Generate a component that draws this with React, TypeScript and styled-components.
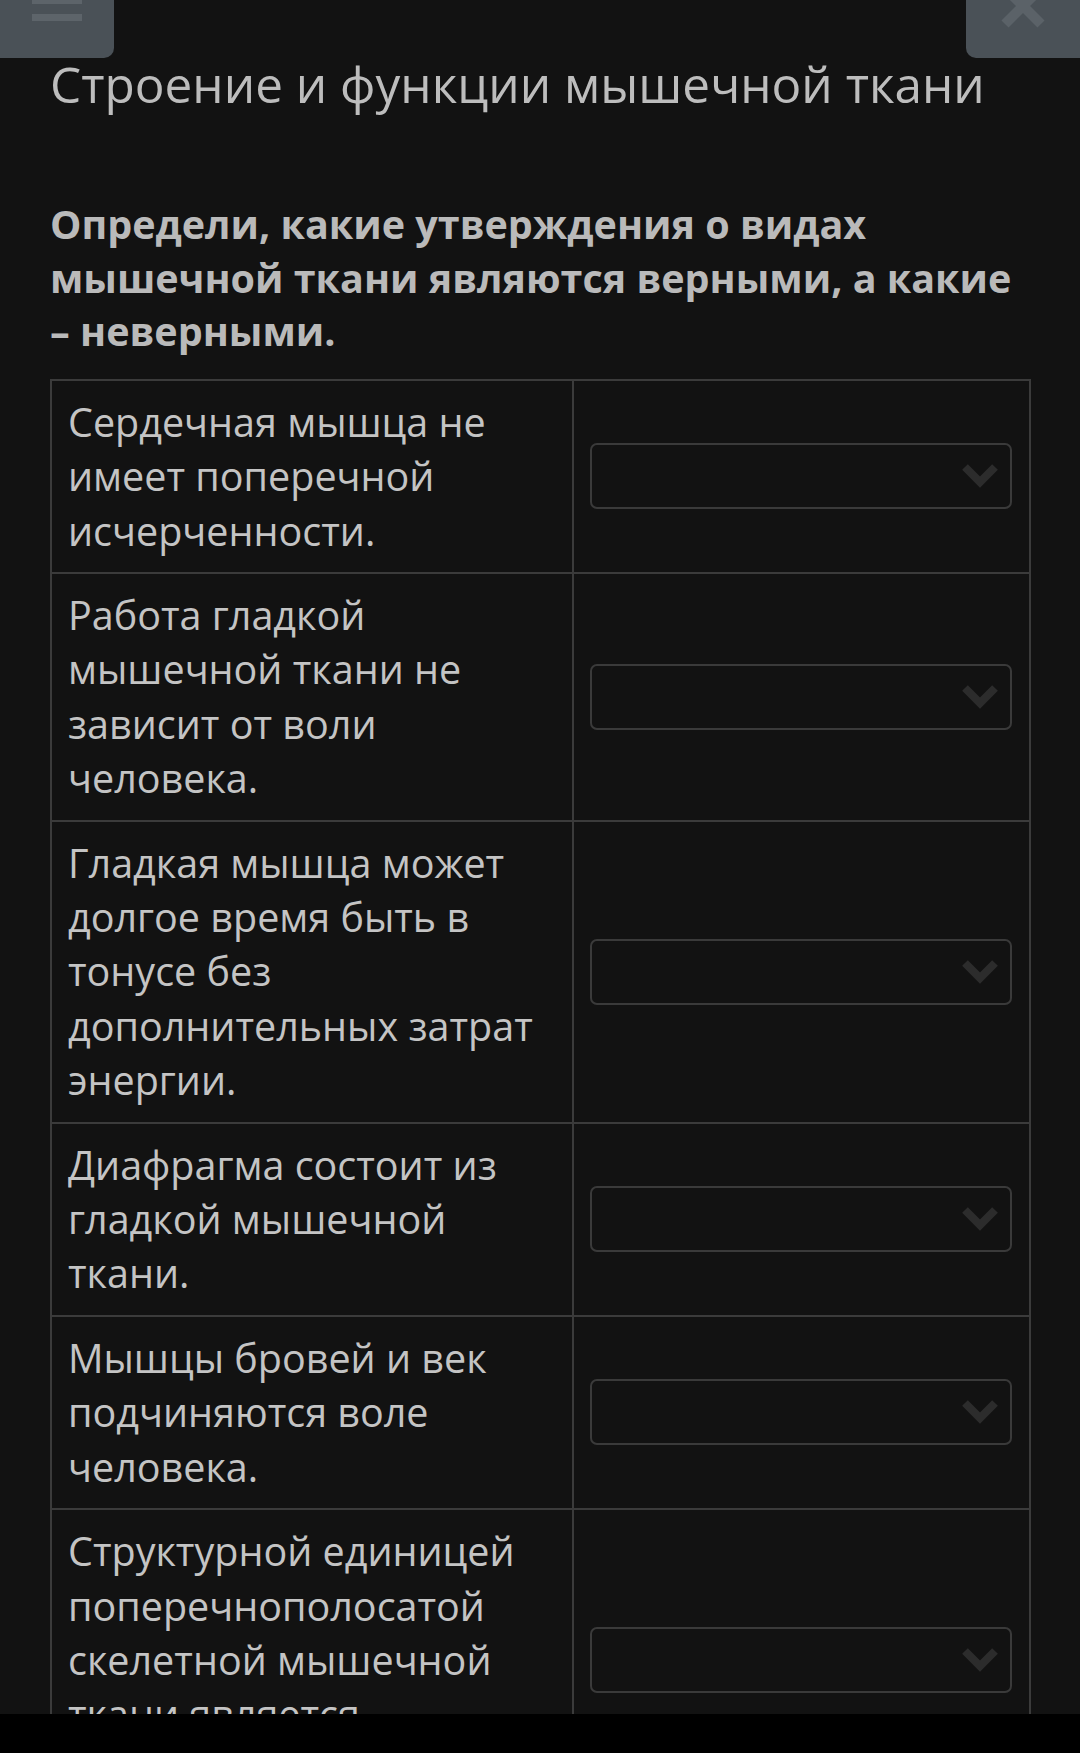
import styled, { createGlobalStyle } from 'styled-components';

const bg = '#121212';
const line = '#3b3b3b';
const text = '#c4c4c4';

const GlobalStyle = createGlobalStyle`
  html, body {
    margin: 0;
    padding: 0;
    background: ${bg};
  }
  body {
    font-family: 'Open Sans', 'Noto Sans', sans-serif;
    color: ${text};
    overflow: hidden;
  }
`;

const Screen = styled.div`
  position: relative;
  width: 1080px;
  height: 1753px;
  overflow: hidden;
  background: ${bg};
`;

const Page = styled.div`
  display: flex;
  flex-direction: column;
  padding: 0 49px 0 50px;
`;

const Title = styled.h1`
  margin: 54px 0 0;
  font-size: 49.5px;
  font-weight: 400;
  line-height: 60px;
  color: #bdbdbd;
  white-space: nowrap;
`;

const Question = styled.p`
  margin: 84px 0 20px;
  font-size: 39.5px;
  font-weight: 700;
  line-height: 53.6px;
  color: #bababa;
`;

const Table = styled.div`
  display: flex;
  flex-direction: column;
  border-top: 2px solid ${line};
`;

const Row = styled.div`
  display: grid;
  grid-template-columns: 522px 1fr;
  border-bottom: 2px solid ${line};
  border-left: 2px solid ${line};
  border-right: 2px solid ${line};
`;

const Statement = styled.div`
  padding: 14px 14px 14px 16px;
  font-size: 39.5px;
  line-height: 54.4px;
  color: ${text};
  border-right: 2px solid ${line};
`;

const AnswerCell = styled.div`
  display: flex;
  align-items: center;
  padding: 0 17px 0 16px;
`;

const Select = styled.div`
  flex: 1;
  height: 62px;
  display: flex;
  align-items: center;
  justify-content: flex-end;
  padding-right: 11px;
  border: 2px solid #3a3a3a;
  border-radius: 7px;
`;

const TopButton = styled.div<{ side: 'left' | 'right' }>`
  position: absolute;
  top: 0;
  ${(p) => (p.side === 'left' ? 'left: 0;' : 'right: 0;')}
  width: 114px;
  height: 58px;
  background: #4a5157;
  border-radius: ${(p) => (p.side === 'left' ? '0 0 10px 0' : '0 0 0 10px')};
  overflow: hidden;
`;

const NavBar = styled.div`
  position: absolute;
  left: 0;
  right: 0;
  bottom: 0;
  height: 39px;
  background: #000;
`;

function Chevron() {
  return (
    <svg width="38" height="26" viewBox="0 0 38 26">
      <polyline
        points="4,4 19,19 34,4"
        fill="none"
        stroke="#2c2c2c"
        strokeWidth="8"
      />
    </svg>
  );
}

const rows = [
  'Сердечная мышца не имеет поперечной исчерченности.',
  'Работа гладкой мышечной ткани не зависит от воли человека.',
  'Гладкая мышца может долгое время быть в тонусе без дополнительных затрат энергии.',
  'Диафрагма состоит из гладкой мышечной ткани.',
  'Мышцы бровей и век подчиняются воле человека.',
  'Структурной единицей поперечнополосатой скелетной мышечной ткани является мышечное волокно.',
];

export default function App() {
  return (
    <Screen>
      <GlobalStyle />
      <Page>
        <Title>Строение и функции мышечной ткани</Title>
        <Question>
          Определи, какие утверждения о видах мышечной ткани являются верными, а какие – неверными.
        </Question>
        <Table>
          {rows.map((r) => (
            <Row key={r}>
              <Statement>{r}</Statement>
              <AnswerCell>
                <Select>
                  <Chevron />
                </Select>
              </AnswerCell>
            </Row>
          ))}
        </Table>
      </Page>
      <TopButton side="left">
        <svg width="114" height="58" viewBox="0 0 114 58">
          <rect x="32" y="-3" width="50" height="7" fill="#5d646a" />
          <rect x="32" y="14" width="50" height="7" fill="#5d646a" />
        </svg>
      </TopButton>
      <TopButton side="right">
        <svg width="114" height="58" viewBox="0 0 114 58">
          <path d="M39 -12 L75 24 M75 -12 L39 24" fill="none" stroke="#5b6268" strokeWidth="10" />
        </svg>
      </TopButton>
      <NavBar />
    </Screen>
  );
}
